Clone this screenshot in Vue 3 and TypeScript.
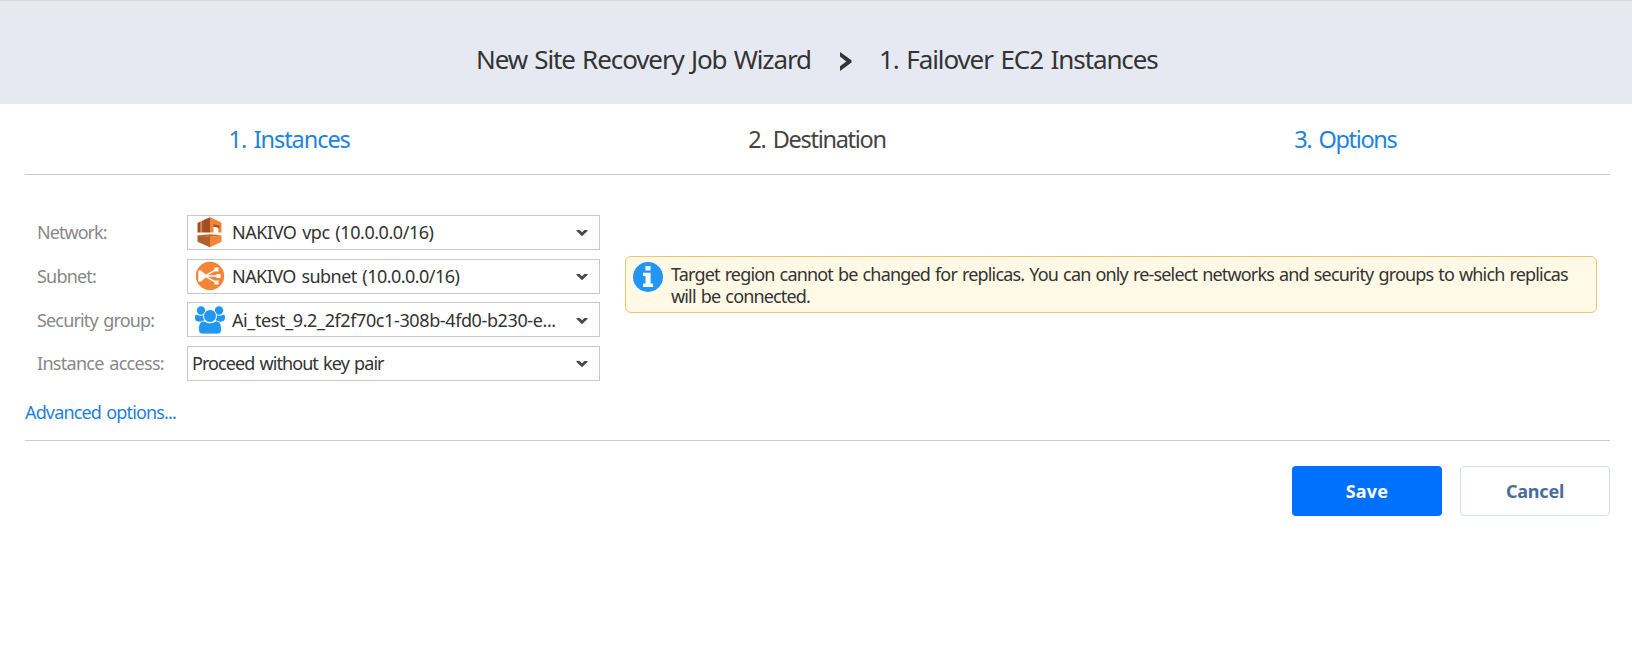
<script setup lang="ts">
interface Field {
  label: string
  name: string
  value: string
  icon: 'vpc' | 'subnet' | 'group' | null
}

const steps = [
  { title: '1. Instances', current: false, name: 'instances' },
  { title: '2. Destination', current: true, name: 'destination' },
  { title: '3. Options', current: false, name: 'options' },
]

const fields: Field[] = [
  { label: 'Network:', name: 'network', value: 'NAKIVO vpc (10.0.0.0/16)', icon: 'vpc' },
  { label: 'Subnet:', name: 'subnet', value: 'NAKIVO subnet (10.0.0.0/16)', icon: 'subnet' },
  { label: 'Security group:', name: 'group', value: 'Ai_test_9.2_2f2f70c1-308b-4fd0-b230-e...', icon: 'group' },
  { label: 'Instance access:', name: 'access', value: 'Proceed without key pair', icon: null },
]
</script>

<template>
  <div class="wizard">
    <header class="header">
      <span class="title job">New Site Recovery Job Wizard</span>
      <svg class="crumb" width="12" height="19" viewBox="0 0 12 19"><path d="M0 0 L11.5 8.2 V10.4 L0 19 V14.2 L6.3 9.4 L0 4.6 Z" fill="#333" /></svg>
      <span class="title page">1. Failover EC2 Instances</span>
    </header>

    <nav class="steps">
      <div v-for="s in steps" :key="s.name" class="step" :class="[s.name, { current: s.current }]"><span>{{ s.title }}</span></div>
    </nav>

    <main class="body">
      <div class="fields">
        <div v-for="f in fields" :key="f.name" class="row" :class="f.name">
          <label class="label">{{ f.label }}</label>
          <div class="select" :class="{ plain: !f.icon }">
            <svg v-if="f.icon === 'vpc'" class="icon" width="30" height="31" viewBox="0 0 30 31">
              <path d="M2.5 6 L5 4.800 V15.600 H2.5Z" fill="#9d5025" />
              <path d="M5 4.800 L6.500 4 V15.600 H5Z" fill="#e07a32" />
              <path d="M6.500 4 L9 3 V15.600 H6.500Z" fill="#a5562a" />
              <path d="M9 2.800 L15 .3 V15.600 H9Z" fill="#9d5025" />
              <path d="M15 .3 L26.500 5.500 V15.600 H23.300 V10.600 L18.500 9.600 V15.600 H15Z" fill="#f58536" />
              <path d="M18.500 7.600 L24.500 8.600 V11.500 H23.300 V10.600 L18.500 9.800Z" fill="#9d5025" />
              <path d="M2.5 18.300 L15 17.300 L26.500 18.300 L15 20Z" fill="#c06a33" />
              <path d="M2.5 18.300 L15 19.700 V30.300 L2.5 24.800Z" fill="#b35f2b" />
              <path d="M15 19.700 L26.500 18.300 V24.800 L15 30.300Z" fill="#f58536" />
            </svg>
            <svg v-else-if="f.icon === 'subnet'" class="icon" width="30" height="31" viewBox="0 0 30 31">
              <circle cx="15" cy="15" r="14.200" fill="#f58536" />
              <path d="M3.300 9.500 H6 L12.500 15 L6 20.500 H3.300Z" fill="#fff" />
              <path d="M11 14.300 L20.500 8.800 M11 15 H23 M11 15.700 L20.500 21.200" stroke="#fff" stroke-width="1.500" fill="none" />
              <path d="M19.500 6.500h4v4h-4z M21.500 13h4v4h-4z M19.500 19.500h4v4h-4z" fill="#fff" />
            </svg>
            <svg v-else-if="f.icon === 'group'" class="icon" width="30" height="31" viewBox="0 0 30 31">
              <g fill="#2196f3">
                <circle cx="6" cy="5.500" r="4.2" />
                <circle cx="24" cy="5.500" r="4.2" />
                <path d="M0 12 C0 9.500 1.500 9.500 3 10.300 Q6 11.300 9 9.800 V16 Q5 17.400 1.6 16 C.4 15.4 0 14 0 12Z" />
                <path d="M30 12 C30 9.500 28.500 9.500 27 10.300 Q24 11.300 21 9.800 V16 Q25 17.400 28.4 16 C29.600 15.4 30 14 30 12Z" />
                <path d="M3.500 25 C3.500 18.500 5.500 16 9 16 Q15 20 21 16 C24.500 16 26.500 18.500 26.500 25 Q26.500 29 23 29 H7 Q3.500 29 3.500 25Z" stroke="#fff" stroke-width=".8" />
                <circle cx="15" cy="11" r="6.500" stroke="#fff" stroke-width="1" />
              </g>
            </svg>
            <span class="value">{{ f.value }}</span>
            <svg class="arrow" width="12" height="8" viewBox="0 0 12 8"><path d="M.5 1 H3.600 L6 3.300 L8.400 1 H11.500 V2 L6 7.300 L.5 2Z" fill="#4a4a4a" /></svg>
          </div>
        </div>
      </div>

      <aside class="info">
        <svg class="info-icon" width="30" height="30" viewBox="0 0 30 30">
          <circle cx="15" cy="15" r="15" fill="#2196f3" />
          <path d="M12.500 4h5v4.400h-5z M10 10.700h7.600v10.800h2.500v3.400H10v-3.400h2.500v-7.400H10z" fill="#fff" />
        </svg>
        <p>Target region cannot be changed for replicas. You can only re-select networks and security groups to which replicas<br>will be connected.</p>
      </aside>
    </main>

    <div class="advanced"><a>Advanced options...</a></div>

    <footer class="footer">
      <button class="btn save">Save</button>
      <button class="btn cancel">Cancel</button>
    </footer>
  </div>
</template>

<style>
body { margin: 0; background: #fff; }
</style>

<style scoped>
.wizard { width: 1632px; height: 650px; overflow: hidden; background: #fff; color: #333; font: 18px/22px "Noto Sans", sans-serif; white-space: nowrap; word-spacing: 1.500px; }
.header { box-sizing: border-box; height: 104px; border-top: 1px solid #d5d9dc; background: #e6e9f2; display: flex; padding: 42px 0 0 476px; }
.title { font-size: 26px; line-height: 32px; }
.job { width: 364px; letter-spacing: -1.090px; }
.crumb { margin-top: 9px; }
.page { margin-left: 27px; letter-spacing: -1.100px; word-spacing: 2px; }
.steps { box-sizing: border-box; height: 71px; margin: 0 22px 0 25px; border-bottom: 1px solid #ccc; display: grid; grid-template-columns: repeat(3, 1fr); text-align: center; font-size: 23.500px; line-height: 30px; padding-top: 20px; word-spacing: 2.500px; }
.step { color: #1e82e0; letter-spacing: -1.070px; }
.step.destination { letter-spacing: -1.300px; }
.step.options { letter-spacing: -1.350px; }
.step.current { color: #444; }
.step.current span, .step.options span { margin-right: 1px; }
.body { display: flex; padding: 40px 35px 0 37px; }
.fields { width: 588px; display: grid; grid-template-rows: 44px 43px 44px 35px; }
.row { display: flex; }
.label { width: 150px; color: #888; line-height: 35px; letter-spacing: -0.950px; }
.subnet .label { letter-spacing: -0.800px; }
.group .label { letter-spacing: -0.840px; line-height: 37px; }
.access .label { letter-spacing: -0.700px; }
.select { box-sizing: border-box; width: 413px; height: 35px; border: 1px solid #c8c8c8; display: flex; align-items: center; padding: 0 11px 0 7px; line-height: 33px; letter-spacing: -0.450px; }
.subnet .select { letter-spacing: -0.550px; }
.group .select { letter-spacing: -0.390px; padding-top: 2px; }
.access .select { letter-spacing: -0.940px; }
.select.plain { padding-left: 4px; }
.icon { flex: none; margin-right: 7px; }
.value { flex: 1; }
.arrow { flex: none; }
.info { box-sizing: border-box; width: 972px; height: 57px; margin-top: 41px; border: 1px solid #f0c36d; border-radius: 6px; background: #fff9e5; display: flex; padding: 5px 7px; }
.info-icon { flex: none; margin-right: 8px; }
.info p { margin: 1px 0 0; letter-spacing: -0.840px; word-spacing: 1.200px; }
.advanced { box-sizing: border-box; height: 60px; margin: 0 22px 0 25px; padding-top: 20px; border-bottom: 1px solid #ccc; color: #1e7fdf; letter-spacing: -0.850px; }
.footer { display: flex; justify-content: flex-end; gap: 18px; padding: 25px 22px 0 0; }
.btn { box-sizing: border-box; width: 150px; height: 50px; border: 0; border-radius: 4px; padding: 0; font: bold 18px/50px "Noto Sans", sans-serif; letter-spacing: 0.200px; }
.save { background: #0070ff; color: #fff; }
.cancel { background: #fff; border: 1px solid #d5dfeb; color: #4a6d9c; line-height: 48px; letter-spacing: -0.200px; }
</style>
